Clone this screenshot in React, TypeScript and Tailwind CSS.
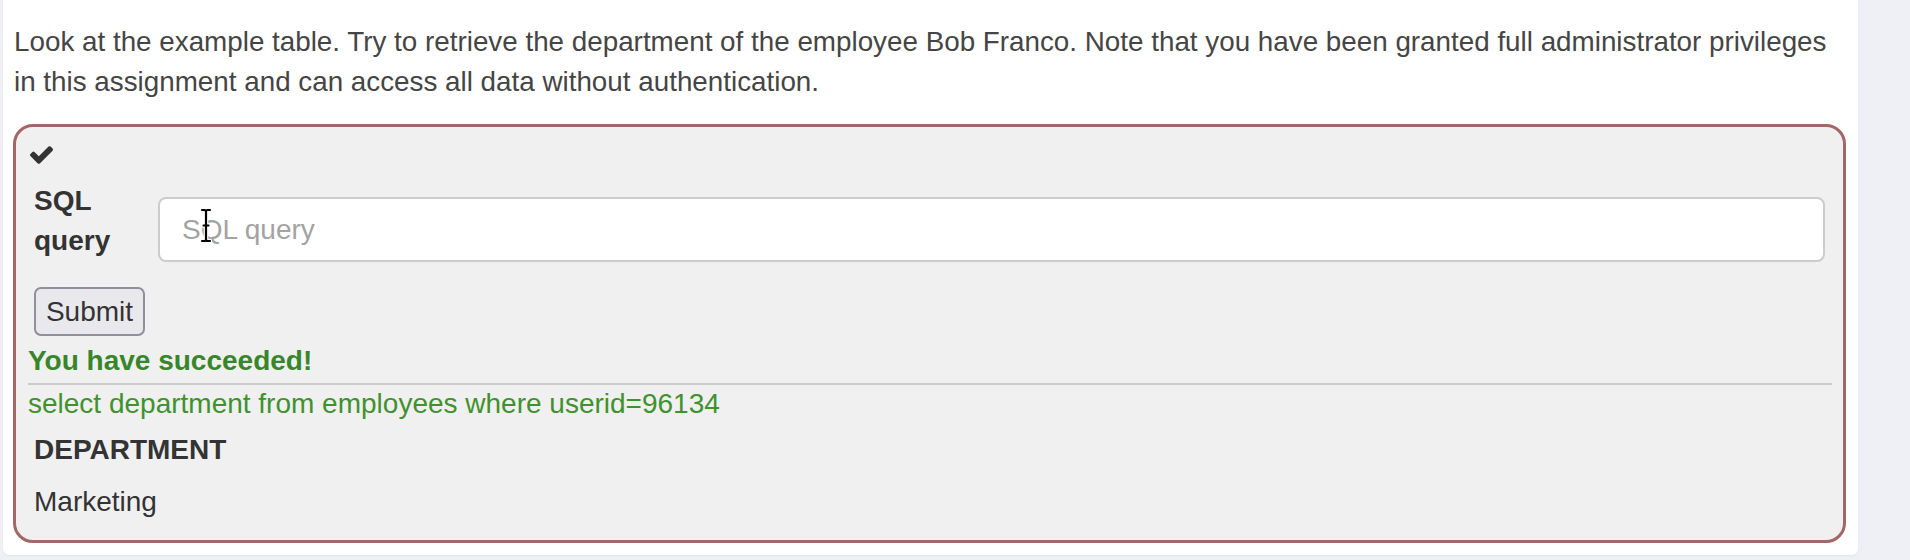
import React from "react";

function CheckIcon() {
  return (
    <svg viewBox="121 334 1550 1188" className="w-[23px] h-[18px]" fill="#333333">
      <path d="M1671 566q0 40-28 68l-724 724-136 136q-28 28-68 28t-68-28l-136-136-362-362q-28-28-28-68t28-68l136-136q28-28 68-28t68 28l294 295 656-657q28-28 68-28t68 28l136 136q28 28 28 68z" />
    </svg>
  );
}

function IBeam() {
  const d = "M2 2 H4.5 Q6 2 6 4 Q6 2 7.5 2 H10 M6 4 V31 M2 33 H4.5 Q6 33 6 31 Q6 33 7.5 33 H10 M3.5 17.5 H8.5";
  return (
    <svg viewBox="0 0 12 35" className="absolute left-[42px] top-[11px] w-[12px] h-[35px]" fill="none">
      <path d={d} stroke="#ffffff" strokeWidth="4.5" strokeLinecap="round" />
      <path d={d} stroke="#000000" strokeWidth="2.2" strokeLinecap="round" />
    </svg>
  );
}

export default function App() {
  return (
    <div className="w-[1910px] h-[560px] bg-[#eef0f5] font-['Liberation_Sans',Arial,sans-serif] text-[28px] leading-[40px] overflow-hidden">
      <div className="ml-[3px] w-[1855px] h-[555px] bg-white rounded-b-[6px] shadow-[0_1px_2px_rgba(0,0,0,0.06)] pl-[10px] pr-[12px] pt-[22px]">
        <p className="text-[#454545] text-[27.8px] pl-[1px]">
          Look at the example table. Try to retrieve the department of the employee Bob Franco. Note that you have been granted full administrator privileges in this assignment and can access all data without authentication.
        </p>
        <div className="mt-[22px] border-[3px] border-[#a36767] rounded-[20px] bg-[#f0f0f0] pl-[12px] pr-[11px] pt-[8px] pb-[12px]">
          <div className="h-[40px] flex items-center pl-[2px]">
            <CheckIcon />
          </div>
          <div className="flex items-start">
            <label className="block w-[130px] pl-[6px] pt-[6px] pb-[10px] font-bold text-[#333333]">
              SQL
              <br />
              query
            </label>
            <div className="relative flex-1 mr-[7px] mt-[22px]">
              <input
                type="text"
                placeholder="SQL query"
                className="w-full h-[65px] bg-white border-2 border-[#cccccc] rounded-[8px] pl-[22px] text-[28px] text-[#555555] placeholder:text-[#a3a3a3] outline-none"
              />
              <IBeam />
            </div>
          </div>
          <div className="mt-[16px] pl-[6px]">
            <button className="w-[111px] h-[49px] flex items-center justify-center bg-[#e9e9ed] border-2 border-[#8f8f9d] rounded-[7px] text-[#333333] text-[28px] leading-[40px]">
              Submit
            </button>
          </div>
          <div className="mt-[5px] font-bold text-[#37872a]">You have succeeded!</div>
          <div className="mt-[2px] h-[2px] bg-[#cccccc]" />
          <div className="-mt-[1px] text-[#3f922e]">select department from employees where userid=96134</div>
          <table className="text-[#333333] border-collapse">
            <thead>
              <tr>
                <th className="text-left font-bold px-[6px] pt-[6px] pb-[6px]">DEPARTMENT</th>
              </tr>
            </thead>
            <tbody>
              <tr>
                <td className="px-[6px] pt-[6px] pb-[6px]">Marketing</td>
              </tr>
            </tbody>
          </table>
        </div>
      </div>
    </div>
  );
}
